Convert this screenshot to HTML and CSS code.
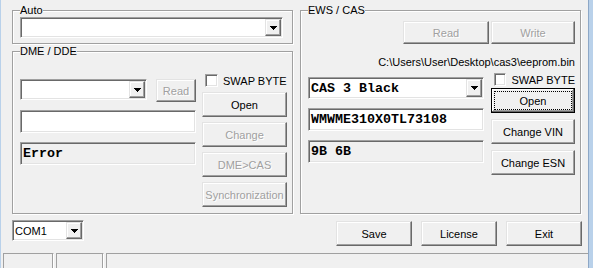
FILE: index.html
```html
<!DOCTYPE html>
<html lang="en">
<head>
  <meta charset="UTF-8">
  <title>EWS / CAS Tool</title>
  <link rel="stylesheet" href="styles.css">
</head>
<body>
  <div class="window">
    <div class="client">
      <div class="columns">
        <div class="col">
          <fieldset class="group group-auto">
            <legend>Auto</legend>
            <div class="combo combo-auto">
              <span class="combo-text"></span>
              <span class="combo-btn"><svg width="7" height="4" viewBox="0 0 7 4"><path d="M0 0h7v1h-1v1h-1v1h-1v1h-1v-1h-1v-1h-1v-1h-1z"/></svg></span>
            </div>
          </fieldset>

          <fieldset class="group group-dme">
            <legend>DME / DDE</legend>
            <div class="group-body">
              <div class="fields dme-fields">
                <div class="row">
                  <div class="combo combo-dme">
                    <span class="combo-text"></span>
                    <span class="combo-btn"><svg width="7" height="4" viewBox="0 0 7 4"><path d="M0 0h7v1h-1v1h-1v1h-1v1h-1v-1h-1v-1h-1v-1h-1z"/></svg></span>
                  </div>
                  <button class="btn btn-small" disabled>Read</button>
                </div>
                <div class="edit edit-dme"></div>
                <div class="edit readonly mono edit-error">Error</div>
              </div>
              <div class="side dme-side">
                <label class="check"><span class="box"></span>SWAP BYTE</label>
                <button class="btn">Open</button>
                <button class="btn" disabled>Change</button>
                <button class="btn" disabled>DME&gt;CAS</button>
                <button class="btn" disabled>Synchronization</button>
              </div>
            </div>
          </fieldset>
        </div>

        <fieldset class="group group-ews">
          <legend>EWS / CAS</legend>
          <div class="ews-top">
            <button class="btn btn-read" disabled>Read</button>
            <button class="btn btn-write" disabled>Write</button>
          </div>
          <div class="path">C:\Users\User\Desktop\cas3\eeprom.bin</div>
          <div class="group-body">
            <div class="fields ews-fields">
              <div class="combo combo-cas mono">
                <span class="combo-text">CAS 3 Black</span>
                <span class="combo-btn"><svg width="7" height="4" viewBox="0 0 7 4"><path d="M0 0h7v1h-1v1h-1v1h-1v1h-1v-1h-1v-1h-1v-1h-1z"/></svg></span>
              </div>
              <div class="edit mono edit-vin">WMWME310X0TL73108</div>
              <div class="edit readonly mono edit-esn">9B 6B</div>
            </div>
            <div class="side ews-side">
              <label class="check"><span class="box"></span>SWAP BYTE</label>
              <button class="btn btn-default"><span class="focus">Open</span></button>
              <button class="btn">Change VIN</button>
              <button class="btn">Change ESN</button>
            </div>
          </div>
        </fieldset>
      </div>

      <div class="bottom">
        <div class="combo combo-com">
          <span class="combo-text">COM1</span>
          <span class="combo-btn"><svg width="7" height="4" viewBox="0 0 7 4"><path d="M0 0h7v1h-1v1h-1v1h-1v1h-1v-1h-1v-1h-1v-1h-1z"/></svg></span>
        </div>
        <div class="actions">
          <button class="btn">Save</button>
          <button class="btn">License</button>
          <button class="btn">Exit</button>
        </div>
      </div>

      <div class="statusbar">
        <div class="panel panel-1"></div>
        <div class="panel panel-2"></div>
        <div class="panel panel-3"></div>
      </div>
    </div>
  </div>
</body>
</html>
```

FILE: styles.css
```css
* {
  box-sizing: border-box;
}
html, body {
  margin: 0;
}
body {
  width: 593px;
  height: 268px;
  overflow: hidden;
  background: #f0f0f0;
  font-family: "Liberation Sans", Arial, sans-serif;
  font-size: 11px;
  color: #000;
}
.window {
  height: 268px;
  display: flex;
  border-left: 1px solid #b9d1ea;
  border-right: 4px solid #b9d1ea;
}
.client {
  flex: 1;
  display: flex;
  flex-direction: column;
  padding-top: 4px;
  border-right: 1px solid #8da7c6;
}
.columns {
  display: flex;
  gap: 7px;
  padding-left: 11px;
}
.col {
  display: flex;
  flex-direction: column;
}

/* group boxes */
.group {
  margin: 0;
  min-width: 0;
  width: 281px;
  border: 1px solid #a0a0a0;
  box-shadow: inset 1px 1px 0 #fff, 1px 1px 0 #fff;
}
.group legend {
  padding: 0;
  line-height: 13px;
  background: #f0f0f0;
}
.group-auto {
  padding: 0 8px 5px 7px;
}
.group-dme {
  margin-top: 1px;
  padding: 0 4px 6px 7px;
}
.group-ews {
  padding: 0 5px 6px 7px;
}
.group-body {
  display: flex;
  justify-content: space-between;
}

/* raised buttons */
.btn {
  display: flex;
  align-items: center;
  justify-content: center;
  width: 85px;
  height: 25px;
  padding: 0;
  font: inherit;
  color: #000;
  background: #f0f0f0;
  border: 1px solid;
  border-color: #e3e3e3 #696969 #696969 #e3e3e3;
  box-shadow: inset -1px -1px 0 #a0a0a0, inset 1px 1px 0 #fff;
}
.btn:disabled {
  color: #a0a0a0;
  text-shadow: 1px 1px 0 #fff;
}
.btn-default {
  border-color: #000;
  box-shadow: inset -1px -1px 0 #696969, inset 1px 1px 0 #fff, inset -2px -2px 0 #a0a0a0;
}
.btn-default .focus {
  display: flex;
  align-items: center;
  justify-content: center;
  width: calc(100% - 6px);
  height: calc(100% - 6px);
  outline: 1px dotted #000;
}

/* sunken fields */
.edit, .combo {
  display: flex;
  align-items: center;
  background: #fff;
  border: 1px solid;
  border-color: #a0a0a0 #fff #fff #a0a0a0;
  box-shadow: inset 1px 1px 0 #696969, inset -1px -1px 0 #e3e3e3;
  padding: 1px 1px 1px 2px;
}
.edit {
  width: 176px;
  height: 23px;
}
.readonly {
  background: #f0f0f0;
}
.mono {
  font-family: "Liberation Mono", "Courier New", monospace;
  font-weight: bold;
  font-size: 13.33px;
}
.combo {
  height: 21px;
}
.combo-text {
  flex: 1;
  white-space: nowrap;
  overflow: hidden;
}
.combo-btn {
  width: 16px;
  height: 100%;
  display: flex;
  align-items: center;
  justify-content: center;
  background: #f0f0f0;
  border: 1px solid;
  border-color: #e3e3e3 #696969 #696969 #e3e3e3;
  box-shadow: inset -1px -1px 0 #a0a0a0, inset 1px 1px 0 #fff;
}
.combo-btn svg {
  display: block;
  fill: #000;
}

/* check boxes */
.check {
  display: flex;
  align-items: center;
  height: 13px;
  padding-left: 3px;
  white-space: nowrap;
}
.check .box {
  width: 13px;
  height: 13px;
  margin-right: 5px;
  background: #fff;
  border: 1px solid;
  border-color: #a0a0a0 #fff #fff #a0a0a0;
  box-shadow: inset 1px 1px 0 #696969, inset -1px -1px 0 #e3e3e3;
}

/* Auto */
.combo-auto {
  width: 263px;
}

/* DME / DDE */
.dme-fields {
  width: 176px;
  padding-top: 21px;
}
.row {
  display: flex;
  align-items: flex-start;
}
.combo-dme {
  width: 127px;
}
.btn-small {
  width: 40px;
  height: 23px;
  margin-left: 9px;
}
.edit-dme {
  margin-top: 8px;
}
.edit-error {
  margin-top: 9px;
}
.dme-side {
  width: 85px;
  margin-right: 1px;
  padding-top: 16px;
}
.dme-side .btn {
  margin-top: 5px;
}

/* EWS / CAS */
.ews-top {
  display: flex;
  justify-content: flex-end;
  gap: 2px;
  margin-top: 4px;
}
.btn-read {
  width: 86px;
  height: 23px;
}
.btn-write {
  width: 84px;
  height: 23px;
}
.path {
  margin-top: 12px;
  line-height: 13px;
  text-align: right;
}
.ews-fields {
  width: 176px;
  padding-top: 8px;
}
.combo-cas {
  height: 22px;
}
.edit-vin, .edit-esn {
  margin-top: 9px;
}
.ews-side {
  width: 84px;
  padding-top: 4px;
}
.ews-side .btn {
  width: 84px;
  margin-top: 6px;
}
.ews-side .btn-default {
  margin-top: 2px;
}

/* bottom row */
.bottom {
  display: flex;
  align-items: flex-start;
  margin-top: 6px;
  padding: 0 6px 0 11px;
}
.combo-com {
  width: 72px;
}
.actions {
  display: flex;
  gap: 9px;
  margin-left: auto;
  margin-top: 1px;
}
.actions .btn {
  width: 76px;
}

/* status bar */
.statusbar {
  display: flex;
  gap: 2px;
  height: 15px;
  margin-top: auto;
  padding-left: 2px;
}
.panel {
  border: 1px solid #a0a0a0;
  border-bottom: 0;
  border-right-color: #fff;
  box-shadow: inset -1px 0 0 #a0a0a0;
}
.panel-1 {
  width: 51px;
}
.panel-2 {
  width: 48px;
}
.panel-3 {
  flex: 1;
  border-right: 0;
  box-shadow: none;
}
```
